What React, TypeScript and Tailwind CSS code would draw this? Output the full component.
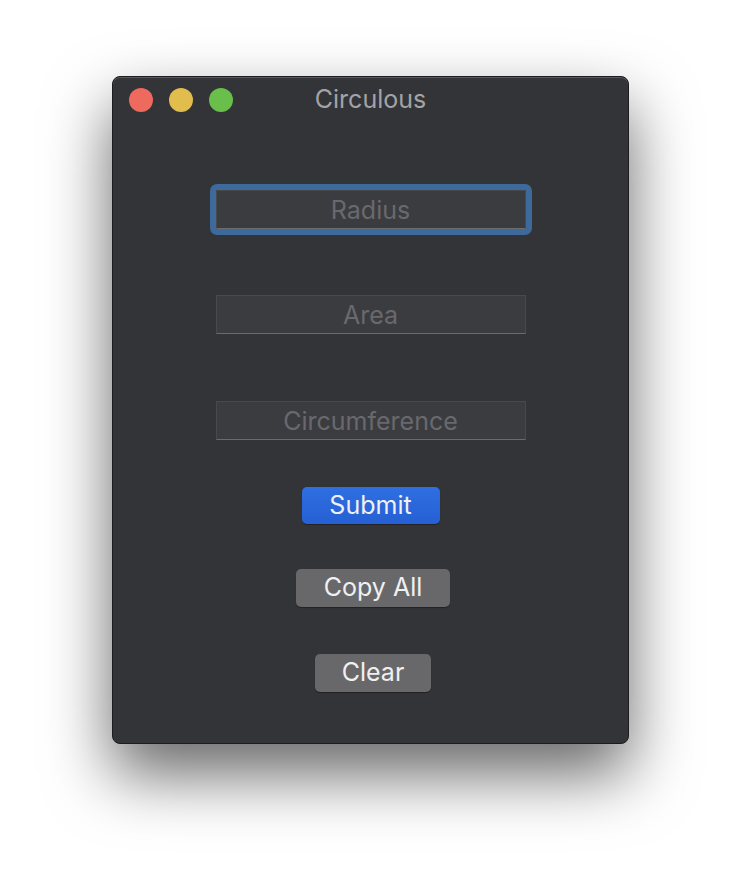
import React from "react";

const font = "font-['Inter','Liberation_Sans',sans-serif]";

function Field({ placeholder, focused }: { placeholder: string; focused?: boolean }) {
  return (
    <div className={focused ? "rounded-[7px] bg-[#3d6a9a] p-[6px]" : "p-[6px]"}>
      <input
        readOnly
        placeholder={placeholder}
        className={`block h-[39px] w-[310px] border border-[#48494d] border-b-[#6a6b6e] bg-[#3b3c40] text-center text-[25px] text-[#e6e6e6] outline-none placeholder:text-[#69696d] ${font}`}
      />
    </div>
  );
}

export default function App() {
  return (
    <div className="flex min-h-[892px] justify-center bg-white pl-px pt-[76px]">
      <div className="flex h-[668px] w-[517px] flex-col items-center rounded-[8px] border border-[#1c1c1e] bg-[#333438] shadow-[0_30px_65px_rgba(0,0,0,0.6),inset_0_1px_0_#5a5a5e]">
        <div className="relative flex h-[45px] w-full items-center px-[16px]">
          <div className="flex gap-[16px]">
            <span className="h-[24px] w-[24px] rounded-full bg-[#ee6a5f]" />
            <span className="h-[24px] w-[24px] rounded-full bg-[#e0bd4c]" />
            <span className="h-[24px] w-[24px] rounded-full bg-[#6abf4b]" />
          </div>
          <span className={`absolute left-0 right-0 text-center text-[25px] text-[#a3a3a7] ${font}`}>
            Circulous
          </span>
        </div>

        <div className="mt-[62px] flex flex-col items-center">
          <Field placeholder="Radius" focused />
          <div className="mt-[54px]">
            <Field placeholder="Area" />
          </div>
          <div className="mt-[55px]">
            <Field placeholder="Circumference" />
          </div>
        </div>

        <button
          className={`mt-[41px] h-[37px] w-[138px] rounded-[5px] bg-gradient-to-b from-[#2f6fe0] to-[#2560d4] text-[25px] text-[#f0f0f0] shadow-[0_1px_1px_rgba(0,0,0,0.35)] ${font}`}
        >
          Submit
        </button>
        <button
          className={`mt-[45px] ml-[5px] h-[38px] w-[154px] rounded-[5px] bg-[#68686b] text-[25px] text-[#f0f0f0] shadow-[0_1px_1px_rgba(0,0,0,0.35)] ${font}`}
        >
          Copy All
        </button>
        <button
          className={`mt-[47px] ml-[5px] h-[38px] w-[116px] rounded-[5px] bg-[#68686b] text-[25px] text-[#f0f0f0] shadow-[0_1px_1px_rgba(0,0,0,0.35)] ${font}`}
        >
          Clear
        </button>
      </div>
    </div>
  );
}
